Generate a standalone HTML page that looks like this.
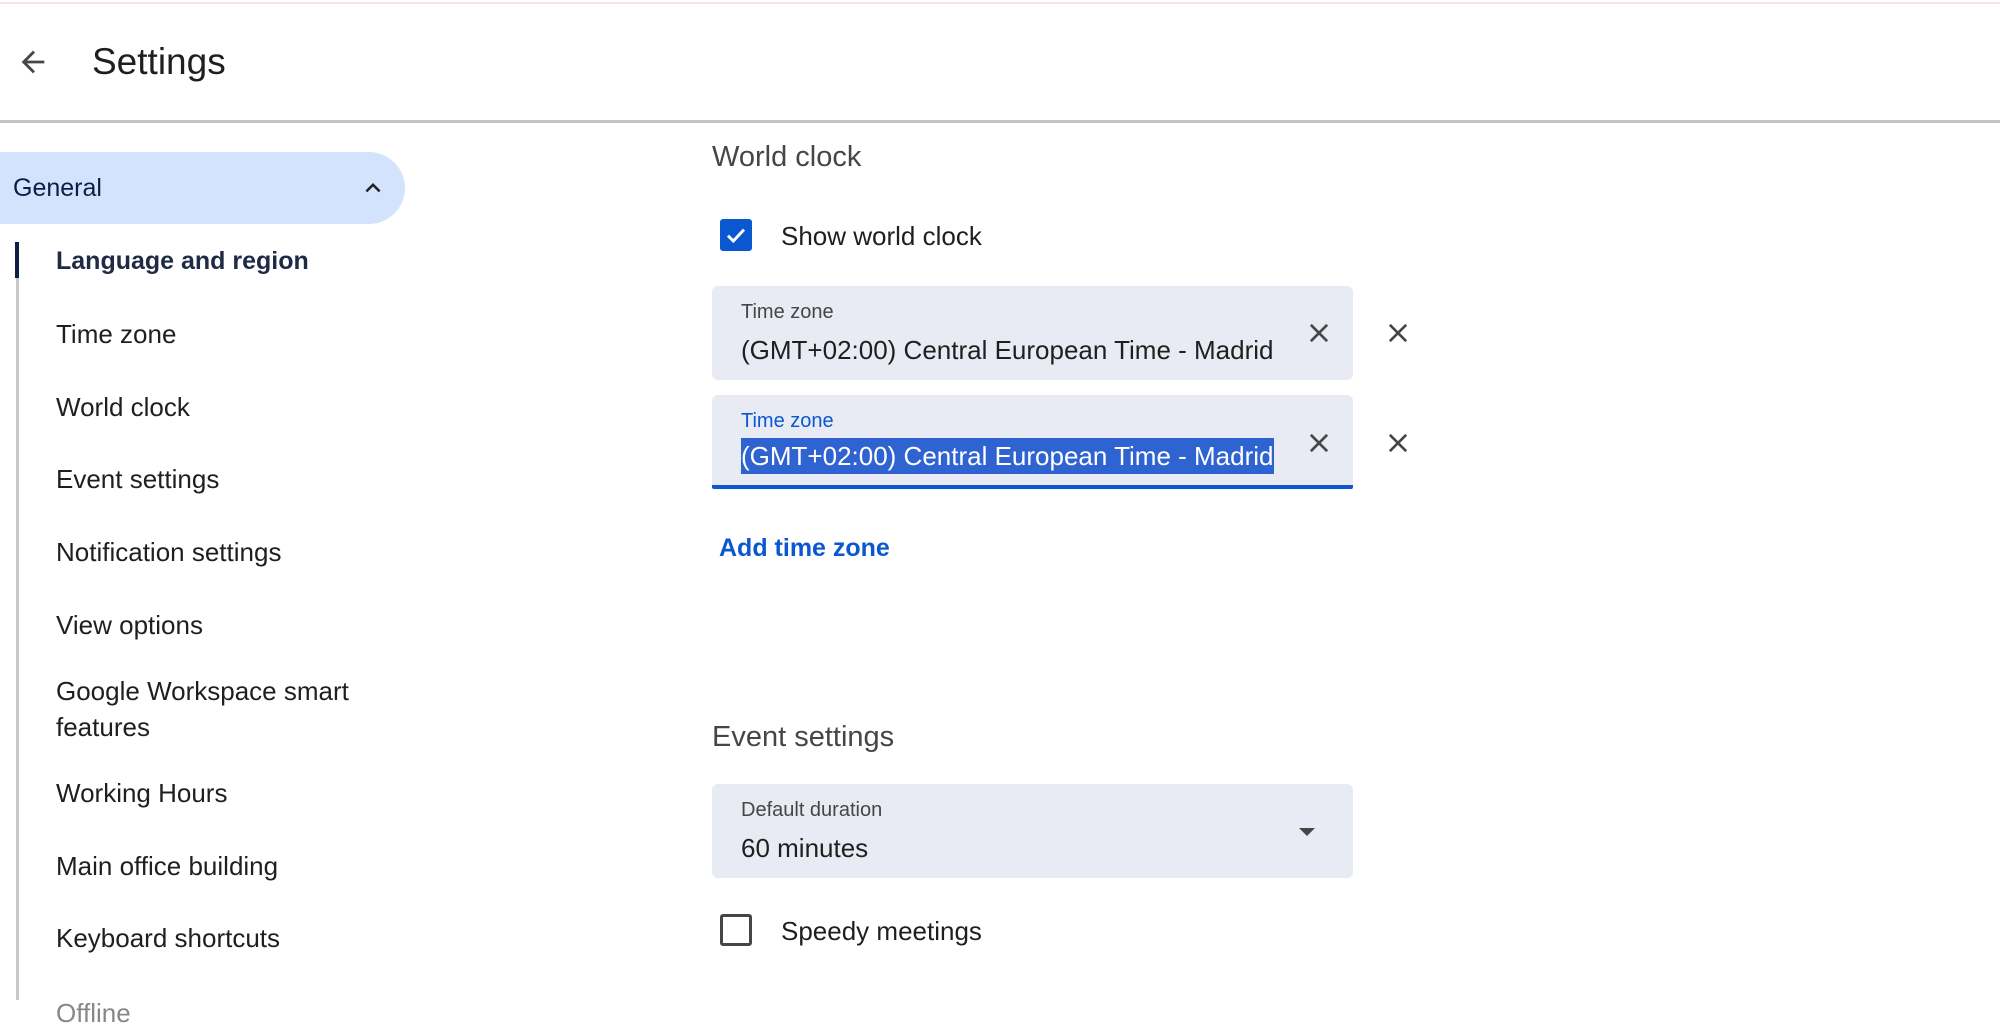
<!DOCTYPE html>
<html><head><meta charset="utf-8"><style>
*{margin:0;padding:0;box-sizing:border-box}
body{width:2000px;height:1000px;overflow:hidden;background:#fff;font-family:"Liberation Sans",Arial,sans-serif;color:#1f1f1f;position:relative}
.a{position:absolute;white-space:nowrap}
.nav{position:absolute;left:56px;font-size:26px;color:#1f1f1f;line-height:38px}
.field{position:absolute;left:712px;width:641px;height:94px;background:#e8ebf3;border-radius:6px}
.lbl{position:absolute;left:29px;top:15px;font-size:20px;color:#444746}
.val{position:absolute;left:29px;top:46px;font-size:26px;color:#1f1f1f;line-height:36px}
.x{position:absolute;width:28px;height:28px}
</style></head><body>
<div class="a" style="left:0;top:2px;width:2000px;height:2px;background:#fbe3e3"></div>
<svg class="a" style="left:16px;top:45px" width="34" height="34" viewBox="0 0 24 24"><path d="M20 11H7.8l5.6-5.6L12 4l-8 8 8 8 1.4-1.4L7.8 13H20z" fill="#444746"/></svg>
<div class="a" style="left:92px;top:41px;font-size:37px;color:#1f1f1f">Settings</div>
<div class="a" style="left:0;top:120px;width:2000px;height:3px;background:#c4c4c4"></div>
<div class="a" style="left:0;top:152px;width:405px;height:72px;background:#d3e3fd;border-radius:0 36px 36px 0"></div>
<div class="a" style="left:13px;top:174px;font-size:25px;color:#0b1f44">General</div>
<svg class="a" style="left:358px;top:173px" width="30" height="30" viewBox="0 0 24 24"><path d="M7.4 15.4 12 10.8l4.6 4.6L18 14l-6-6-6 6z" fill="#1f1f1f"/></svg>
<div class="a" style="left:16px;top:242px;width:3px;height:758px;background:#c7c7c7"></div>
<div class="a" style="left:15px;top:242px;width:4px;height:36px;background:#0b1f44"></div>
<div class="nav" style="top:242px;font-weight:bold;font-size:25px;color:#1f2a44">Language and region</div>
<div class="nav" style="top:315px">Time zone</div>
<div class="nav" style="top:388px">World clock</div>
<div class="nav" style="top:460px">Event settings</div>
<div class="nav" style="top:533px">Notification settings</div>
<div class="nav" style="top:606px">View options</div>
<div class="nav" style="top:672px">Google Workspace smart</div>
<div class="nav" style="top:708px">features</div>
<div class="nav" style="top:774px">Working Hours</div>
<div class="nav" style="top:847px">Main office building</div>
<div class="nav" style="top:919px">Keyboard shortcuts</div>
<div class="nav" style="top:994px;color:#888">Offline</div>

<div class="a" style="left:712px;top:141px;font-size:29px;color:#444746">World clock</div>
<div class="a" style="left:720px;top:219px;width:32px;height:32px;background:#0b57d0;border-radius:3px"></div>
<svg class="a" style="left:720px;top:219px" width="32" height="32" viewBox="0 0 24 24"><path d="M6 12.5l4 4 8-8.5" stroke="#fff" stroke-width="2.2" fill="none"/></svg>
<div class="a" style="left:781px;top:221px;font-size:26px">Show world clock</div>

<div class="field" style="top:286px"><div class="lbl">Time zone</div><div class="val">(GMT+02:00) Central European Time - Madrid</div></div>
<div class="field" style="top:395px;border-bottom:4px solid #0b57d0;border-radius:6px 6px 2px 2px"><div class="lbl" style="color:#0b57d0">Time zone</div><div class="val" style="background:#2f63d1;color:#fff;top:43px;height:36px">(GMT+02:00) Central European Time - Madrid</div></div>
<svg class="x" style="left:1305px;top:319px" viewBox="0 0 24 24"><path d="M5 5l14 14M19 5 5 19" stroke="#444746" stroke-width="2.3"/></svg>
<svg class="x" style="left:1384px;top:319px" viewBox="0 0 24 24"><path d="M5 5l14 14M19 5 5 19" stroke="#444746" stroke-width="2.3"/></svg>
<svg class="x" style="left:1305px;top:429px" viewBox="0 0 24 24"><path d="M5 5l14 14M19 5 5 19" stroke="#444746" stroke-width="2.3"/></svg>
<svg class="x" style="left:1384px;top:429px" viewBox="0 0 24 24"><path d="M5 5l14 14M19 5 5 19" stroke="#444746" stroke-width="2.3"/></svg>
<div class="a" style="left:719px;top:534px;font-size:25px;font-weight:bold;color:#0b57d0">Add time zone</div>

<div class="a" style="left:712px;top:721px;font-size:29px;color:#444746">Event settings</div>
<div class="field" style="top:784px"><div class="lbl">Default duration</div><div class="val">60 minutes</div></div>
<svg class="a" style="left:1297px;top:826px" width="20" height="12" viewBox="0 0 20 12"><path d="M2 2h16l-8 8z" fill="#444746"/></svg>
<div class="a" style="left:720px;top:914px;width:32px;height:32px;border:3px solid #444746;border-radius:3px"></div>
<div class="a" style="left:781px;top:916px;font-size:26px">Speedy meetings</div>
</body></html>
